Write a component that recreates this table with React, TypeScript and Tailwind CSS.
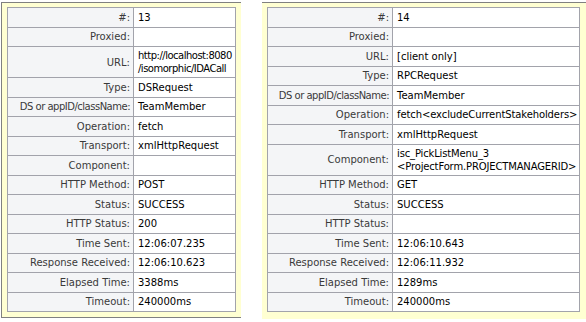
type Row = { label: string; value?: string; lines?: string[]; tight?: string }

const first: Row[] = [
  { label: "#:", value: "13" },
  { label: "Proxied:" },
  { label: "URL:", lines: ["http://localhost:8080", "/isomorphic/IDACall"], tight: "tracking-[-0.5px]" },
  { label: "Type:", value: "DSRequest" },
  { label: "DS or appID/className:", value: "TeamMember" },
  { label: "Operation:", value: "fetch" },
  { label: "Transport:", value: "xmlHttpRequest" },
  { label: "Component:" },
  { label: "HTTP Method:", value: "POST" },
  { label: "Status:", value: "SUCCESS" },
  { label: "HTTP Status:", value: "200" },
  { label: "Time Sent:", value: "12:06:07.235" },
  { label: "Response Received:", value: "12:06:10.623" },
  { label: "Elapsed Time:", value: "3388ms" },
  { label: "Timeout:", value: "240000ms" },
]

const second: Row[] = [
  { label: "#:", value: "14" },
  { label: "Proxied:" },
  { label: "URL:", value: "[client only]" },
  { label: "Type:", value: "RPCRequest" },
  { label: "DS or appID/className:", value: "TeamMember" },
  { label: "Operation:", value: "fetch<excludeCurrentStakeholders>", tight: "tracking-[-0.1px]" },
  { label: "Transport:", value: "xmlHttpRequest" },
  {
    label: "Component:",
    lines: ["isc_PickListMenu_3", "<ProjectForm.PROJECTMANAGERID>"],
    tight: "tracking-[-0.15px]",
  },
  { label: "HTTP Method:", value: "GET" },
  { label: "Status:", value: "SUCCESS" },
  { label: "HTTP Status:" },
  { label: "Time Sent:", value: "12:06:10.643" },
  { label: "Response Received:", value: "12:06:11.932" },
  { label: "Elapsed Time:", value: "1289ms" },
  { label: "Timeout:", value: "240000ms" },
]

function DetailTable({ rows, labelWidth }: { rows: Row[]; labelWidth: string }) {
  return (
    <div className="flex flex-col border-l border-t border-[#a2a3ab] bg-white">
      {rows.map((r, i) => (
        <div key={i} className={`flex ${r.lines ? "h-[31px]" : "h-[19.5px]"}`}>
          <div
            className={`${labelWidth} shrink-0 flex items-center justify-end pr-[3px] bg-[#f4f5f7] text-[#3a3a3a] border-r border-b border-[#a2a3ab] whitespace-nowrap`}
          >
            {/* the long label is drawn narrower in the original */}
            <span className={r.label.length > 20 ? "tracking-[-0.5px]" : ""}>{r.label}</span>
          </div>
          <div className="flex-1 flex flex-col justify-center pl-[4px] text-black border-r border-b border-[#a2a3ab] whitespace-nowrap leading-[13px]">
            {r.lines ? (
              r.lines.map((l, j) => (
                <span key={j} className={r.tight ?? ""}>
                  {l}
                </span>
              ))
            ) : (
              <span className={r.tight ?? ""}>{r.value}</span>
            )}
          </div>
        </div>
      ))}
    </div>
  )
}

export default function App() {
  return (
    <div className="w-[586px] h-[322px] bg-white flex items-start pl-[1px] pt-[2px] gap-[21px] text-[10px] font-['DejaVu_Sans',sans-serif] overflow-hidden">
      <div className="w-[240px] h-[316px] bg-[#ffffd2] border-l border-t border-b border-[#808080] pl-[5px] pr-[5px] pt-[4px]">
        <DetailTable rows={first} labelWidth="w-[126px]" />
      </div>
      <div className="w-[324px] h-[317px] bg-[#ffffd2] border-t border-[#808080] pl-[5px] pr-[6px] pt-[4px]">
        <DetailTable rows={second} labelWidth="w-[125px]" />
      </div>
    </div>
  )
}
